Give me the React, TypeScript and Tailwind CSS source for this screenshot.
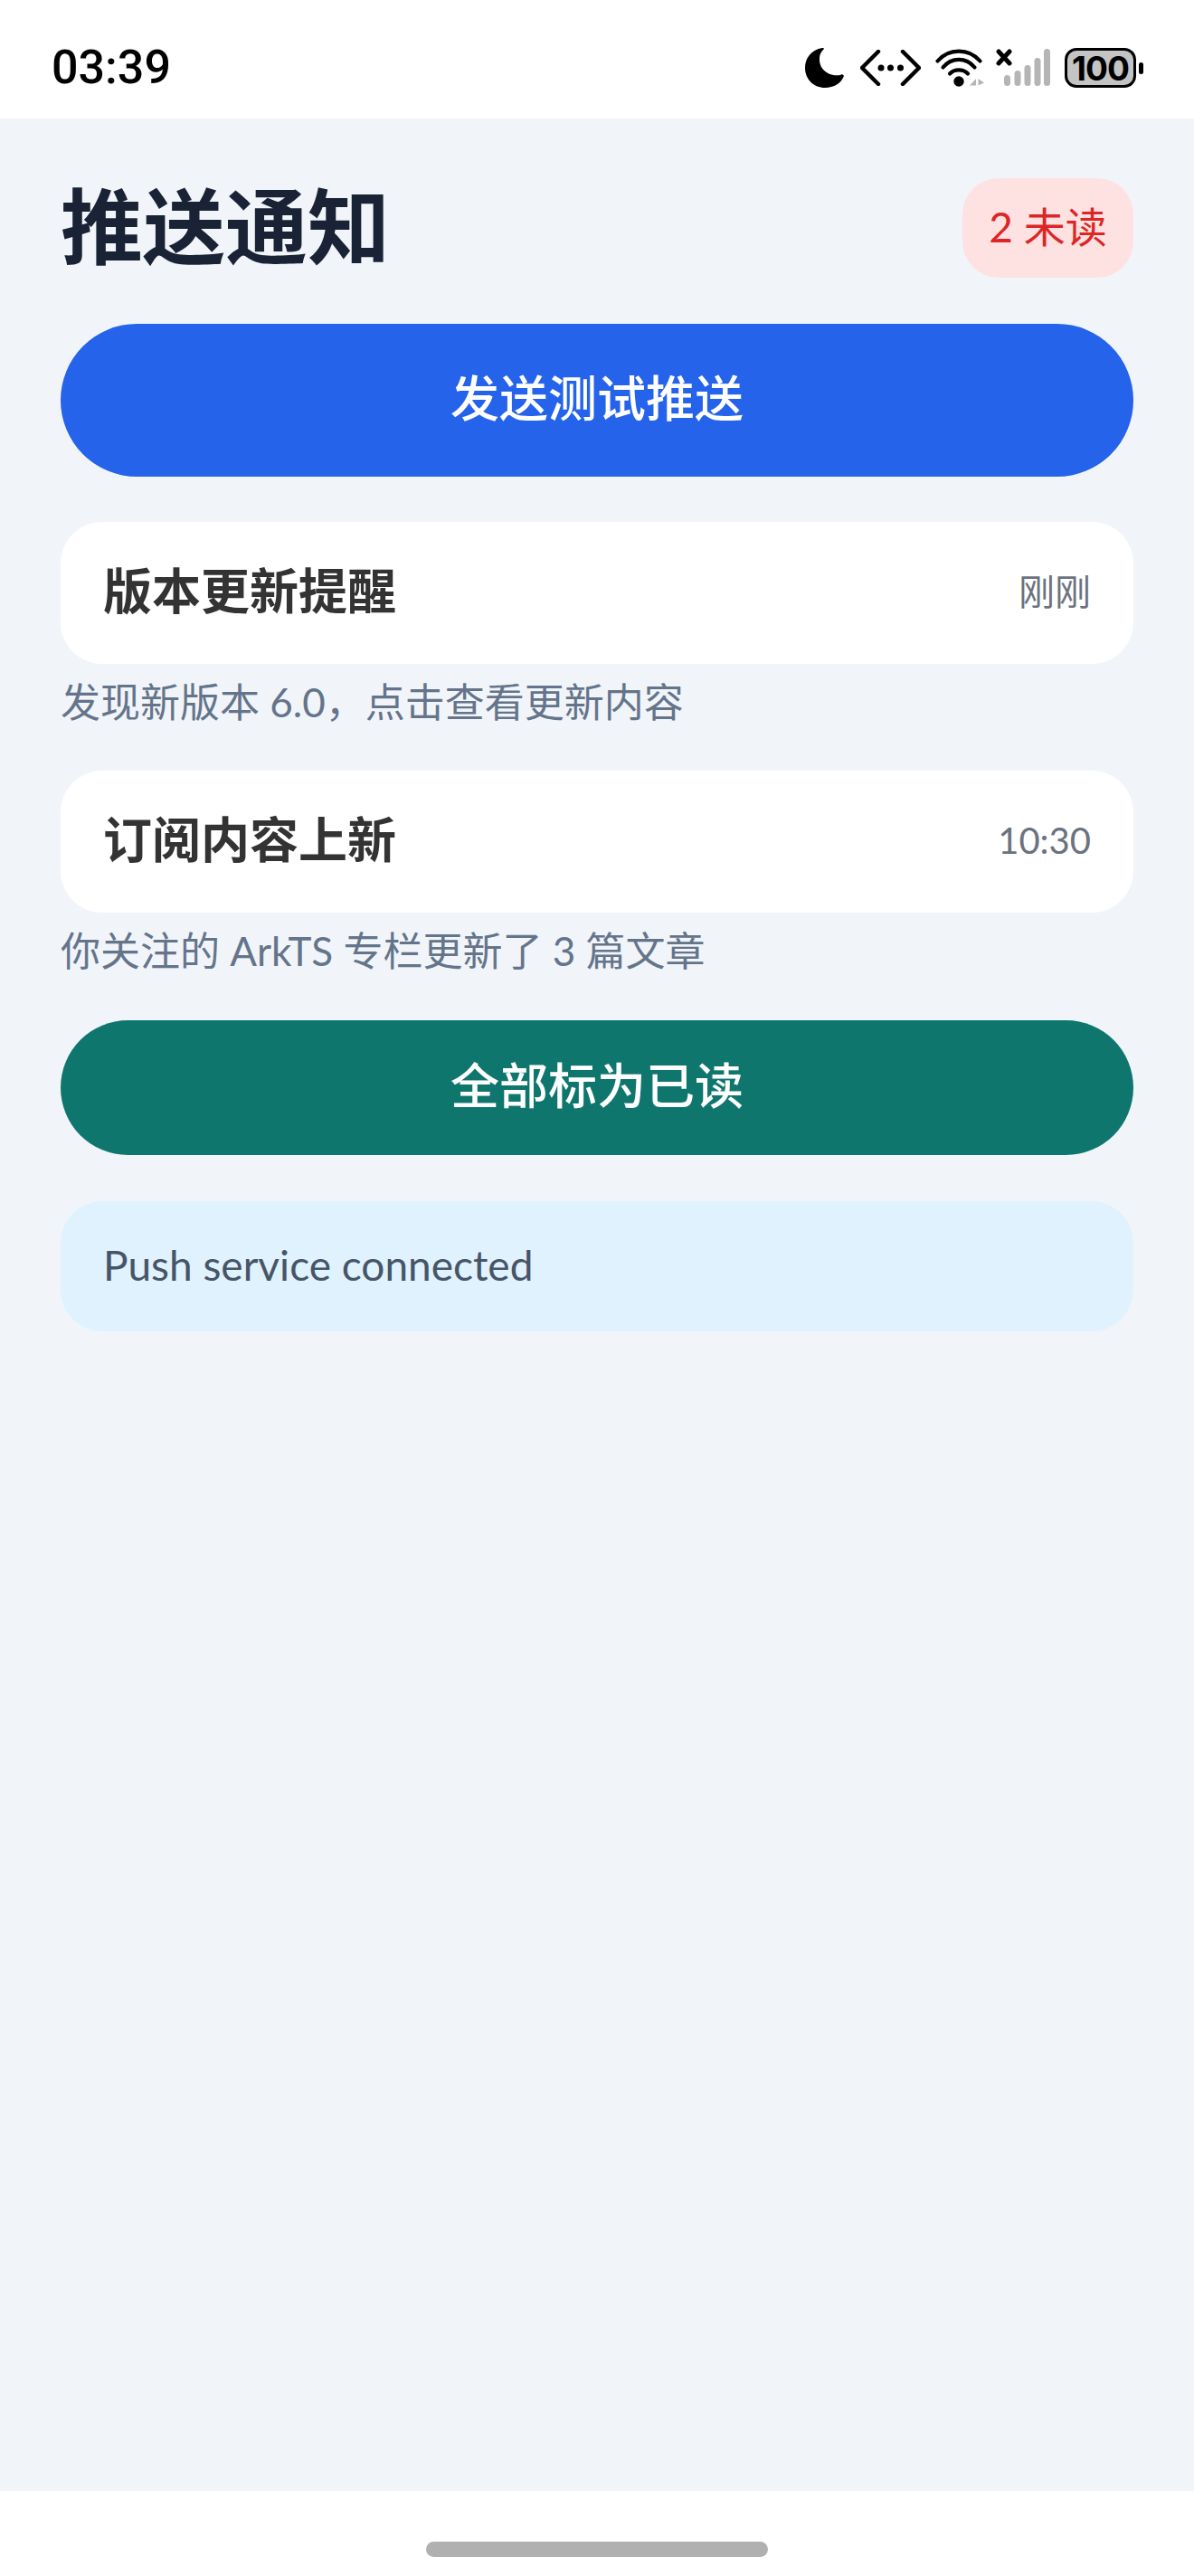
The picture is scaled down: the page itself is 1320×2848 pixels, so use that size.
const cjk = "font-['Lato','Noto_Sans_CJK_SC',sans-serif]";

const MoonIcon = () => (
  <svg width="44" height="46" viewBox="0 0 44 46">
    <path d="M19 1C7 3 0 12 0 23C0 36 10 45 22 45C32 45 40 40 43 32C42 30 40 30 39 31C27 33 15 25 16 12C16 8 18 5 21 2C21 1 20 1 19 1Z" fill="#000" />
  </svg>
);

const CodeIcon = () => (
  <svg width="67" height="40" viewBox="0 0 67 40" fill="none" stroke="#000" strokeWidth="4.5" strokeLinecap="round" strokeLinejoin="round">
    <path d="M20 2L2 20L20 38" />
    <path d="M47 2L65 20L47 38" />
    <circle cx="23" cy="20" r="3.5" fill="#000" stroke="none" />
    <circle cx="33.5" cy="20" r="3.5" fill="#000" stroke="none" />
    <circle cx="44.5" cy="20" r="3.5" fill="#000" stroke="none" />
  </svg>
);

const WifiIcon = () => (
  <svg width="54" height="44" viewBox="0 0 54 44" fill="none" stroke="#000" strokeWidth="4.2" strokeLinecap="round">
    <path d="M2.5 14.5C15 0 37 0 49.5 14.5" />
    <path d="M8.5 21.5C18 10 34 10 43.5 21.5" />
    <path d="M16 28.5C21 23 31 23 36 28.5" />
    <circle cx="26" cy="37" r="5.7" fill="#000" stroke="none" />
    <path d="M38 41.5L45 34V41.5Z" fill="#b5b5b5" stroke="none" />
    <path d="M47.5 34L54 38.5L47.5 41.5Z" fill="#b5b5b5" stroke="none" />
  </svg>
);

const SignalIcon = () => (
  <svg width="60" height="42" viewBox="0 0 60 42">
    <path d="M3 3L15 16M15 3L3 16" stroke="#000" strokeWidth="5" strokeLinecap="round" />
    <rect x="9" y="29" width="7" height="12" rx="3.5" fill="#b5b5b5" />
    <rect x="20.500" y="24" width="7" height="17" rx="3.5" fill="#b5b5b5" />
    <rect x="31.500" y="18" width="7" height="23" rx="3.5" fill="#b5b5b5" />
    <rect x="42.500" y="10" width="7" height="31" rx="3.5" fill="#b5b5b5" />
    <rect x="53" y="0" width="7" height="41" rx="3.5" fill="#b5b5b5" />
  </svg>
);

const BatteryIcon = () => (
  <div className="flex items-center gap-[3px]">
    <div className="flex h-[44px] w-[79px] items-center justify-center rounded-[13px] border-[3px] border-black bg-[#c4c4c4] font-['Inter',sans-serif] text-[37px] leading-none font-bold tracking-[-1px] text-black">
      100
    </div>
    <div className="h-[13px] w-[5px] rounded-full bg-black" />
  </div>
);

const StatusBar = () => (
  <div className="flex h-[131px] items-center justify-between bg-white pt-[19px] pr-[56px] pl-[57px]">
    <span className="font-['Roboto',sans-serif] text-[52px] leading-none font-medium text-black">03:39</span>
    <div className="flex items-center">
      <MoonIcon />
      <div className="ml-[17px]">
        <CodeIcon />
      </div>
      <div className="ml-[16px]">
        <WifiIcon />
      </div>
      <div className="ml-[13px]">
        <SignalIcon />
      </div>
      <div className="ml-[16px]">
        <BatteryIcon />
      </div>
    </div>
  </div>
);

type Notice = { title: string; time: string; body: string };

const notices: Notice[] = [
  { title: "版本更新提醒", time: "刚刚", body: "发现新版本 6.0，点击查看更新内容" },
  { title: "订阅内容上新", time: "10:30", body: "你关注的 ArkTS 专栏更新了 3 篇文章" },
];

const NoticeItem = ({ item }: { item: Notice }) => (
  <div>
    <div className="flex h-[157px] items-center justify-between rounded-[46px] bg-white pr-[47px] pb-[3px] pl-[47px]">
      <span className="text-[54px] leading-none font-bold text-[#333333]">{item.title}</span>
      <span className="text-[40px] leading-none text-[#6b7280]">{item.time}</span>
    </div>
    <p className="mt-[17px] text-[44px] leading-[50px] text-[#64748b]">{item.body}</p>
  </div>
);

export default function App() {
  return (
    <div className={`flex h-[2848px] w-[1320px] flex-col bg-[#f1f5f9] ${cjk}`}>
      <StatusBar />
      <main className="flex-1 px-[67px] pt-[66px]">
        <div className="flex h-[110px] items-center justify-between">
          <h1 className="pb-[6px] text-[91px] leading-none font-bold text-[#1a2335]">推送通知</h1>
          <span className="flex h-[110px] w-[189px] items-center justify-center rounded-[40px] bg-[#fee2e2] pb-[3px] text-[46px] leading-none text-[#dc2626]">
            2 未读
          </span>
        </div>
        <button className="mt-[51px] flex h-[169px] w-full items-center justify-center rounded-full bg-[#2563eb] pb-[3px] text-[54px] leading-none font-medium text-white">
          发送测试推送
        </button>
        <div className="mt-[50px] flex flex-col gap-[51px]">
          {notices.map((item) => (
            <NoticeItem key={item.title} item={item} />
          ))}
        </div>
        <button className="mt-[52px] flex h-[149px] w-full items-center justify-center rounded-full bg-[#0f766e] pb-[3px] text-[54px] leading-none font-medium text-white">
          全部标为已读
        </button>
        <div className="mt-[51px] flex h-[144px] items-center rounded-[46px] bg-[#e0f2fe] pr-[47px] pb-[3px] pl-[47px] text-[46px] leading-none text-[#475569]">
          Push service connected
        </div>
      </main>
      <div className="flex h-[94px] justify-center bg-white pt-[56px]">
        <div className="h-[17px] w-[378px] rounded-full bg-[#b0b0b0]" />
      </div>
    </div>
  );
}
